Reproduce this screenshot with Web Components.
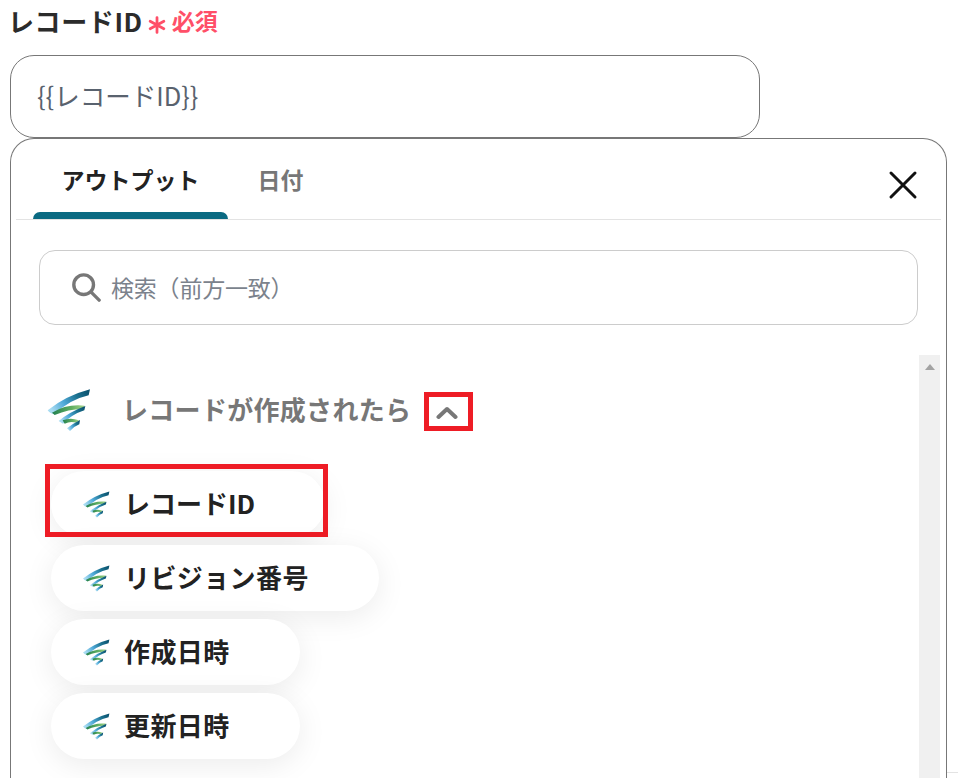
<!DOCTYPE html>
<html lang="ja">
<head>
<meta charset="utf-8">
<title>レコードID</title>
<style>
  html, body { margin: 0; height: 100%; overflow: hidden; background: #fff; }
  body { font-family: "Noto Sans CJK JP", "Noto Sans", sans-serif; }
</style>
</head>
<body>
<record-field>
  <picker-panel>
    <output-group title="レコードが作成されたら">
      <output-pill marked>レコードID</output-pill>
      <output-pill>リビジョン番号</output-pill>
      <output-pill>作成日時</output-pill>
      <output-pill>更新日時</output-pill>
    </output-group>
  </picker-panel>
</record-field>

<script>
let markCount = 0;

/* ribbon logo, drawn in the coordinates of a 3x crop */
class BrandMark extends HTMLElement {
  constructor() {
    super();
    this.attachShadow({ mode: 'open' });
  }
  connectedCallback() {
    const id = 'm' + (++markCount);
    this.shadowRoot.innerHTML = `
      <style>
        :host { display: block; flex: none; width: var(--mark-size, 45px); height: var(--mark-size, 45px); }
        svg { display: block; width: 100%; height: 100%; }
      </style>
      <svg viewBox="50 50 135 135" aria-hidden="true">
        <defs>
          <linearGradient id="${id}b" x1="0" x2="1" y1="0.6" y2="0.2">
            <stop offset="0" stop-color="#a9dcf2"/><stop offset=".35" stop-color="#4fa9d8"/>
            <stop offset=".7" stop-color="#1d7391"/><stop offset="1" stop-color="#0b5370"/>
          </linearGradient>
          <linearGradient id="${id}g" x1="0" x2="1" y1="0.5" y2="0.5">
            <stop offset="0" stop-color="#23804f"/><stop offset=".6" stop-color="#5fae62"/>
            <stop offset="1" stop-color="#a7d58a"/>
          </linearGradient>
        </defs>
        <path fill="url(#${id}b)" d="M55 120Q110 76 182 57L178 75Q120 88 76 132Q62 130 55 120Z"/>
        <path fill="url(#${id}g)" d="M68 127Q112 100 166 106L158 116Q118 116 76 134Z"/>
        <path fill="url(#${id}b)" d="M168 107L165 120Q128 132 101 160L88 152Q122 124 168 107Z"/>
        <path fill="url(#${id}g)" d="M100 150Q124 141 149 150L141 157Q122 152 106 160Z"/>
        <path fill="url(#${id}b)" d="M152 149L150 162Q136 167 122 182L113 174Q130 160 152 149Z"/>
      </svg>`;
  }
}
customElements.define('brand-mark', BrandMark);

class OutputPill extends HTMLElement {
  constructor() {
    super();
    this.attachShadow({ mode: 'open' }).innerHTML = `
      <style>
        :host {
          display: flex; align-items: center; gap: 14px; position: relative;
          width: fit-content; height: 66px; box-sizing: border-box;
          padding: 0 70px 0 31px; border-radius: 33px; background: #fff;
          box-shadow: 0 6px 30px rgba(0,0,0,.08);
          font-size: 26px; letter-spacing: .4px; font-weight: 700; color: #222; --mark-size: 28px;
        }
        :host([marked]) { letter-spacing: 0; }
        :host([marked])::after {
          content: ""; position: absolute; left: -6px; top: -7px;
          width: 283px; height: 73px; box-sizing: border-box;
          border: 5px solid #ee1c25;
        }
        .text { margin-top: -4px; }
      </style>
      <brand-mark></brand-mark><span class="text"><slot></slot></span>`;
  }
}
customElements.define('output-pill', OutputPill);

class OutputGroup extends HTMLElement {
  constructor() {
    super();
    this.attachShadow({ mode: 'open' }).innerHTML = `
      <style>
        :host { display: block; }
        header {
          display: flex; align-items: center; height: 46px; padding-left: 7px;
          font-size: 26px; letter-spacing: .3px; font-weight: 700; color: #777;
        }
        h3 { margin: -2px 0 0 31px; font: inherit; }
        .toggle {
          display: flex; align-items: center; justify-content: center;
          width: 49px; height: 39px; margin: 5px 0 0 13px; box-sizing: border-box;
          border: 5px solid #ee1c25;
        }
        .toggle svg { margin: 3px 3px 0 0; }
        .list { display: flex; flex-direction: column; gap: 8px; margin: 39px 0 0 12px; }
      </style>
      <header>
        <brand-mark></brand-mark>
        <h3></h3>
        <span class="toggle">
          <svg width="22" height="14" viewBox="0 0 22 14" fill="none" stroke="#777" stroke-width="4" stroke-linecap="round" stroke-linejoin="round"><path d="M2.500 11 11 3l8.500 8"/></svg>
        </span>
      </header>
      <div class="list"><slot></slot></div>`;
  }
  connectedCallback() {
    this.shadowRoot.querySelector('h3').textContent = this.getAttribute('title');
  }
}
customElements.define('output-group', OutputGroup);

class PickerPanel extends HTMLElement {
  constructor() {
    super();
    this.attachShadow({ mode: 'open' }).innerHTML = `
      <style>
        :host {
          display: block; width: 937px; height: 700px; box-sizing: border-box;
          border: 1px solid #777; border-bottom: 0; border-radius: 24px 24px 0 0;
          padding: 0 5px; background: #fff;
        }
        .tabs {
          display: flex; align-items: stretch; height: 81px; box-sizing: border-box;
          border-bottom: 1px solid #e3e3e3; padding-left: 17px; position: relative;
        }
        .tab {
          display: flex; align-items: center; justify-content: center;
          height: 80px; box-sizing: border-box;
          font-size: 23px; font-weight: 700; color: #777; width: 105px;
        }
        .tab.on { width: 195px; color: #222; position: relative; }
        .tab.on::after {
          content: ""; position: absolute; left: 0; right: 0; bottom: 0; height: 7px;
          background: #0b6a82; border-radius: 7px 7px 0 0;
        }
        .close { position: absolute; right: 23px; top: 31px; display: block; }
        .search {
          display: flex; align-items: center; gap: 10px; height: 75px; box-sizing: border-box;
          margin: 30px 23px 0 23px; width: 879px; padding: 0 0 2px 31px;
          border: 1px solid #ccc; border-radius: 16px;
          font-size: 23px; letter-spacing: -.2px; color: #7b828c;
        }
        .search svg { flex: none; }
        .body { display: flex; margin-top: 30px; padding-left: 23px; height: 430px; }
        .scroll { flex: 1; padding-top: 31px; min-width: 0; }
        .bar {
          flex: none; width: 21px; background: #f0f0f0; margin-right: 1px;
          display: flex; justify-content: center; padding-top: 9px; box-sizing: border-box;
        }
        .bar i {
          width: 0; height: 0; border: 5px solid transparent; border-top: 0;
          border-bottom: 6px solid #a3a3a3;
        }
      </style>
      <div class="tabs">
        <div class="tab on">アウトプット</div>
        <div class="tab">日付</div>
        <svg class="close" width="30" height="30" viewBox="0 0 30 30" fill="none" stroke="#111" stroke-width="3" stroke-linecap="round"><path d="M3 3l24 24M27 3 3 27"/></svg>
      </div>
      <div class="search">
        <svg width="30" height="30" viewBox="0 0 32 32" fill="none" stroke="#777" stroke-width="3.6" stroke-linecap="round"><circle cx="13.5" cy="13.5" r="10.5"/><path d="M21.5 21.5 30 30"/></svg>
        <span>検索（前方一致）</span>
      </div>
      <div class="body">
        <div class="scroll"><slot></slot></div>
        <div class="bar"><i></i></div>
      </div>`;
  }
}
customElements.define('picker-panel', PickerPanel);

class RecordField extends HTMLElement {
  constructor() {
    super();
    this.attachShadow({ mode: 'open' }).innerHTML = `
      <style>
        :host { display: block; padding: 0 0 0 10px; position: relative; height: 778px; overflow: hidden; }
        .label {
          display: flex; align-items: center; height: 55px; margin-left: -2px; padding-bottom: 15px; box-sizing: border-box;
          font-size: 26px; letter-spacing: .6px; font-weight: 700; color: #2b2b2b;
        }
        .star { margin: 10px 0 0 5px; width: 18px; height: 18px; flex: none; }
        .req { margin-left: 6px; font-size: 23px; letter-spacing: 0; color: #ff4f68; }
        .input {
          width: 750px; height: 83px; box-sizing: border-box; display: flex; align-items: center;
          padding: 0 0 4px 26px; border: 1px solid #777; border-radius: 24px;
          font-size: 25.5px; color: #59626e;
        }
        .rule { position: absolute; right: 0; bottom: 5px; width: 11px; height: 1px; background: #e3e3e3; }
      </style>
      <div class="label">レコードID
        <svg class="star" viewBox="0 0 17 17" stroke="#ff4f68" stroke-width="2.6" stroke-linecap="round"><path d="M8.500 1.500v14M2 5l13 7M15 5 2 12"/></svg>
        <span class="req">必須</span>
      </div>
      <div class="input">{{レコードID}}</div>
      <slot></slot>
      <div class="rule"></div>`;
  }
}
customElements.define('record-field', RecordField);
</script>
</body>
</html>
